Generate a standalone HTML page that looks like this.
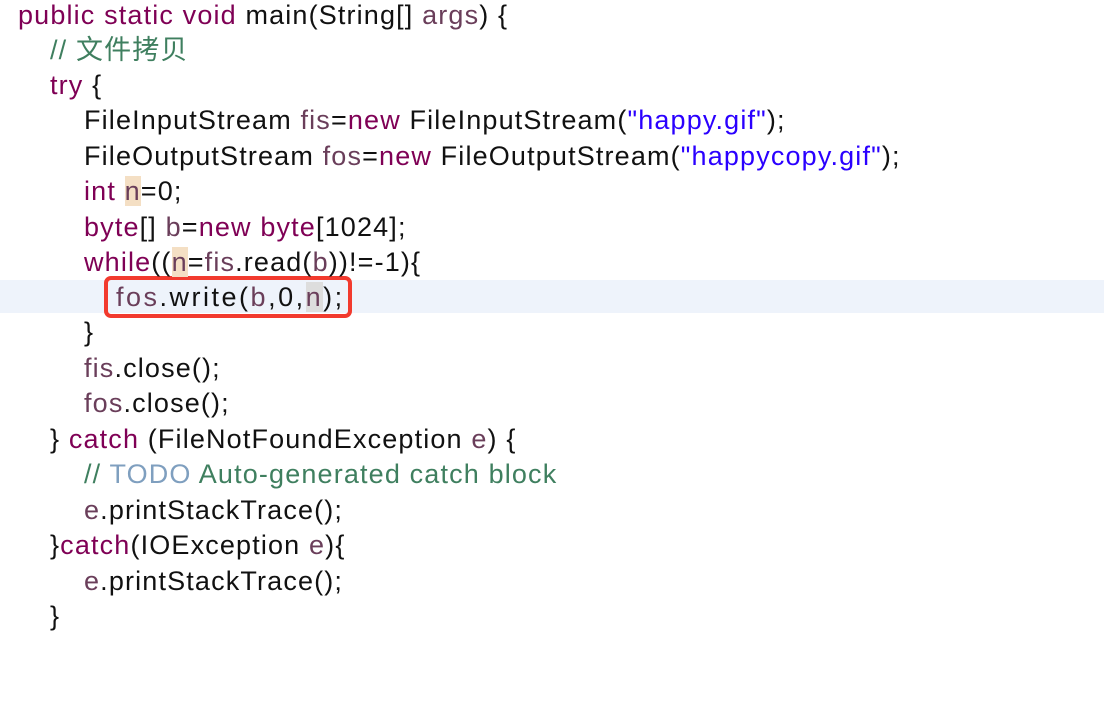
<!DOCTYPE html>
<html><head><meta charset="utf-8"><style>
body{margin:0;width:1104px;height:706px;background:#fff;overflow:hidden;position:relative;font-family:"Liberation Sans","Noto Sans CJK SC",sans-serif;font-size:27px;letter-spacing:1.15px;color:#111}
.l{position:absolute;white-space:pre;line-height:30px;height:30px}
.k{color:#7f0055}.v{color:#6a3e5a}.s{color:#2a00ff}.c{color:#3f7f5f}.t{color:#7f9fbf}
.h{background:#f4dfc4}
</style></head><body>
<div style="position:absolute;left:0;top:280px;width:1104px;height:33px;background:#eef3fb"></div>
<div style="position:absolute;left:104px;top:276px;width:240px;height:34px;border:4px solid #f23a2e;border-radius:7px"></div>
<div class="l" style="left:18px;top:0px"><span class="k">public static void</span> main(String[] <span class="v">args</span>) {</div>
<div class="l" style="left:50px;top:35px"><span class="c">// 文件拷贝</span></div>
<div class="l" style="left:50px;top:70px"><span class="k">try</span> {</div>
<div class="l" style="left:84px;top:105px">FileInputStream <span class="v">fis</span>=<span class="k">new</span> FileInputStream(<span class="s">"happy.gif"</span>);</div>
<div class="l" style="left:84px;top:141px">FileOutputStream <span class="v">fos</span>=<span class="k">new</span> FileOutputStream(<span class="s">"happycopy.gif"</span>);</div>
<div class="l" style="left:84px;top:176px"><span class="k">int</span> <span class="v h">n</span>=0;</div>
<div class="l" style="left:84px;top:212px"><span class="k">byte</span>[] <span class="v">b</span>=<span class="k">new</span> <span class="k">byte</span>[1024];</div>
<div class="l" style="left:84px;top:247px"><span class="k">while</span>((<span class="v h">n</span>=<span class="v">fis</span>.read(<span class="v">b</span>))!=-1){</div>
<div class="l" style="left:116px;top:282px;letter-spacing:2.5px"><span class="v">fos</span>.write(<span class="v">b</span>,0,<span class="v" style="background:#ddd">n</span>);</div>
<div class="l" style="left:84px;top:317px">}</div>
<div class="l" style="left:84px;top:353px"><span class="v">fis</span>.close();</div>
<div class="l" style="left:84px;top:388px"><span class="v">fos</span>.close();</div>
<div class="l" style="left:50px;top:424px">} <span class="k">catch</span> (FileNotFoundException <span class="v">e</span>) {</div>
<div class="l" style="left:84px;top:459px"><span class="c">// <span class="t">TODO</span> Auto-generated catch block</span></div>
<div class="l" style="left:84px;top:495px"><span class="v">e</span>.printStackTrace();</div>
<div class="l" style="left:50px;top:530px">}<span class="k">catch</span>(IOException <span class="v">e</span>){</div>
<div class="l" style="left:84px;top:566px"><span class="v">e</span>.printStackTrace();</div>
<div class="l" style="left:50px;top:601px">}</div>
</body></html>
